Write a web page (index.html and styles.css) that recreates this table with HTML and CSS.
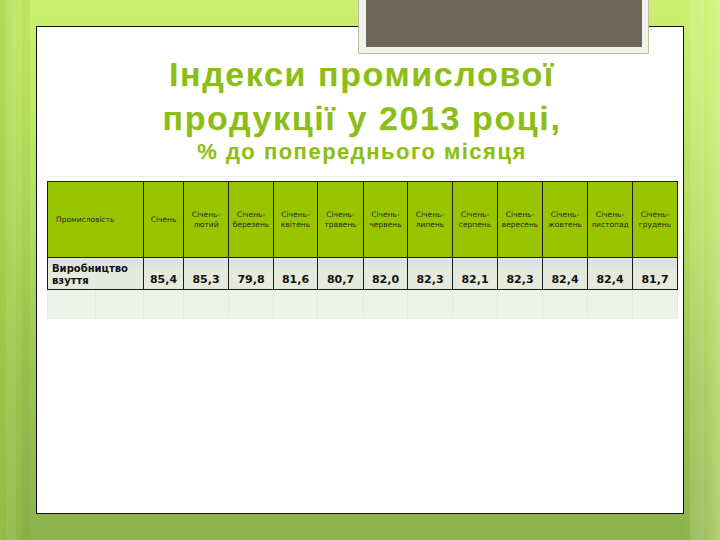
FILE: index.html
```html
<!DOCTYPE html>
<html lang="uk">
<head>
<meta charset="utf-8">
<title>Індекси промислової продукції у 2013 році</title>
<link rel="stylesheet" href="styles.css">
</head>
<body>
<div class="slide">
  <div class="stripes"></div>
  <div class="photo"></div>
  <main class="panel">
    <h1 class="title">Індекси промислової<br>продукції у 2013 році,</h1>
    <p class="subtitle">% до попереднього місяця</p>
    <div class="table-wrap">
      <table class="data">
        <colgroup>
          <col class="c-first">
          <col class="c-jan">
          <col class="c-m"><col class="c-m"><col class="c-s"><col class="c-l"><col class="c-s">
          <col class="c-m"><col class="c-m"><col class="c-m"><col class="c-m"><col class="c-m"><col class="c-m">
        </colgroup>
        <tr class="head">
          <th class="first">Промисловість</th>
          <th>Січень</th>
          <th>Січень-<br>лютий</th>
          <th>Січень-<br>березень</th>
          <th>Січень-<br>квітень</th>
          <th>Січень-<br>травень</th>
          <th>Січень-<br>червень</th>
          <th>Січень-<br>липень</th>
          <th>Січень-<br>серпень</th>
          <th>Січень-<br>вересень</th>
          <th>Січень-<br>жовтень</th>
          <th>Січень-<br>листопад</th>
          <th>Січень-<br>грудень</th>
        </tr>
        <tr class="row">
          <td class="first">Виробництво<br>взуття</td>
          <td>85,4</td>
          <td>85,3</td>
          <td>79,8</td>
          <td>81,6</td>
          <td>80,7</td>
          <td>82,0</td>
          <td>82,3</td>
          <td>82,1</td>
          <td>82,3</td>
          <td>82,4</td>
          <td>82,4</td>
          <td>81,7</td>
        </tr>
        <tr class="empty">
          <td class="first"><div class="split"><span></span><span></span></div></td>
          <td></td><td></td><td></td><td></td><td></td><td></td>
          <td></td><td></td><td></td><td></td><td></td><td></td>
        </tr>
      </table>
    </div>
  </main>
</div>
</body>
</html>
```

FILE: styles.css
```css
html, body {
  margin: 0;
  padding: 0;
}

body {
  width: 720px;
  height: 540px;
  overflow: hidden;
  font-family: "DejaVu Sans", Verdana, sans-serif;
}

.slide {
  position: relative;
  width: 720px;
  height: 540px;
  padding: 26px 36px 0 36px;
  box-sizing: border-box;
  background:
    linear-gradient(to right, rgba(150, 200, 60, 0.55) 0, rgba(150, 200, 60, 0.25) 14px, rgba(150, 200, 60, 0) 30px),
    linear-gradient(to left, rgba(230, 250, 170, 0.45) 0, rgba(230, 250, 170, 0.15) 18px, rgba(230, 250, 170, 0) 36px),
    linear-gradient(to bottom, #c9f16f 0%, #c2ea68 18%, #b0d85c 45%, #9cc452 70%, #8cb24b 100%);
}

.stripes {
  position: absolute;
  inset: 0;
  pointer-events: none;
  background:
    linear-gradient(to right,
      transparent 0, transparent 6px,
      rgba(255, 255, 255, 0.07) 6px, rgba(255, 255, 255, 0.07) 16px,
      transparent 16px, transparent 22px,
      rgba(90, 140, 30, 0.10) 22px, rgba(90, 140, 30, 0.10) 30px,
      transparent 30px, transparent 690px,
      rgba(255, 255, 255, 0.10) 690px, rgba(255, 255, 255, 0.10) 704px,
      transparent 704px);
}

.photo {
  position: absolute;
  left: 359px;
  top: -7px;
  width: 289px;
  height: 60px;
  box-sizing: border-box;
  background: #6f6858;
  border: 6px solid #f3f3ee;
  border-left-width: 7px;
  box-shadow: 0 0 0 1px #bcbc96;
  z-index: 2;
}

.panel {
  position: relative;
  display: flex;
  flex-direction: column;
  width: 648px;
  height: 488px;
  box-sizing: border-box;
  background: #ffffff;
  border: 1px solid #111111;
  padding: 25px 6px 0 10px;
}

.title {
  margin: 0;
  font-family: "Liberation Sans", Arial, sans-serif;
  font-weight: 700;
  font-size: 34px;
  line-height: 44px;
  letter-spacing: 1.6px;
  text-align: center;
  color: #8dbd18;
  text-shadow: 0 1px 1px rgba(220, 240, 150, 0.6);
}

.subtitle {
  margin: 0;
  font-family: "Liberation Sans", Arial, sans-serif;
  font-weight: 700;
  font-size: 22px;
  line-height: 24px;
  letter-spacing: 1.5px;
  text-align: center;
  color: #8dbd18;
  text-shadow: 0 1px 1px rgba(220, 240, 150, 0.6);
}

.table-wrap {
  margin-top: 12px;
  border-top: 1px solid #eeeeee;
  padding-top: 4px;
}

.data {
  width: 630px;
  table-layout: fixed;
  border-collapse: collapse;
}

.c-first { width: 96px; }
.c-jan { width: 40px; }
.c-m { width: 45px; }
.c-s { width: 44px; }
.c-l { width: 46px; }

.head th {
  height: 75px;
  padding: 0 1px;
  background: #99c400;
  border: 1px solid #1c1c1c;
  font-weight: 400;
  font-size: 7.5px;
  line-height: 9.5px;
  color: #262a1c;
  text-align: center;
  vertical-align: middle;
}

.head th.first {
  text-align: left;
  padding-left: 8px;
}

.row td {
  height: 28px;
  padding: 0 0 3px 0;
  background: linear-gradient(to bottom, #dfe3dc 0, #dfe3dc 9px, #e5eadc 9px);
  border: 1px solid #1c1c1c;
  font-weight: 700;
  font-size: 11px;
  line-height: 12px;
  color: #111111;
  text-align: center;
  vertical-align: bottom;
}

.row td.first {
  text-align: left;
  padding-left: 4px;
  font-size: 10px;
  line-height: 12px;
  padding-bottom: 2px;
}

.empty td {
  height: 29px;
  padding: 0;
  background: #eef3e9;
  border-left: 1px solid #e3e9de;
  border-right: 1px solid #e3e9de;
}

.split {
  display: flex;
  height: 29px;
}

.split span {
  flex: 1;
}

.split span + span {
  border-left: 1px solid #e3e9de;
}
```
